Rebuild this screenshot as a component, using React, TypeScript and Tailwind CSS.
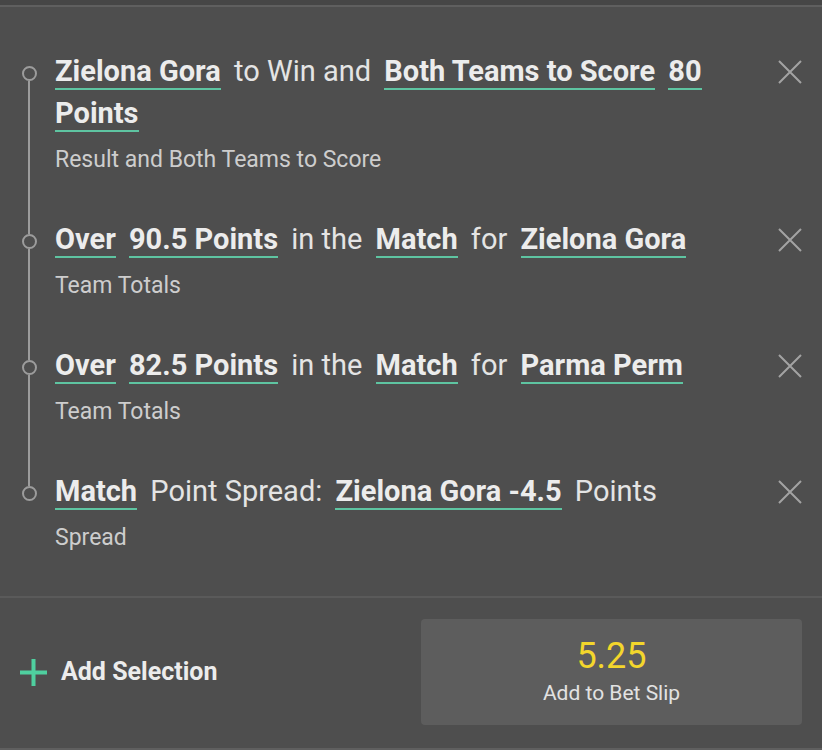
import React from "react";

// a piece of a leg title: bold ones are underlined selections
type Part = { text: string; sel?: boolean };

type Leg = {
  id: number;
  parts: Part[];
  market: string;
};

const legs: Leg[] = [
  {
    id: 1,
    parts: [
      { text: "Zielona Gora", sel: true },
      { text: "to Win and" },
      { text: "Both Teams to Score", sel: true },
      { text: "80 Points", sel: true },
    ],
    market: "Result and Both Teams to Score",
  },
  {
    id: 2,
    parts: [
      { text: "Over", sel: true },
      { text: "90.5 Points", sel: true },
      { text: "in the" },
      { text: "Match", sel: true },
      { text: "for" },
      { text: "Zielona Gora", sel: true },
    ],
    market: "Team Totals",
  },
  {
    id: 3,
    parts: [
      { text: "Over", sel: true },
      { text: "82.5 Points", sel: true },
      { text: "in the" },
      { text: "Match", sel: true },
      { text: "for" },
      { text: "Parma Perm", sel: true },
    ],
    market: "Team Totals",
  },
  {
    id: 4,
    parts: [
      { text: "Match", sel: true },
      { text: "Point Spread:" },
      { text: "Zielona Gora -4.5", sel: true },
      { text: "Points" },
    ],
    market: "Spread",
  },
];

function CloseIcon() {
  return (
    <svg width="24" height="24" viewBox="0 0 24 24" fill="none">
      <path d="M1 1L23 23M23 1L1 23" stroke="#a3a3a3" strokeWidth="2" />
    </svg>
  );
}

function LegRow({ leg, first, last }: { leg: Leg; first: boolean; last: boolean }) {
  return (
    <div className="flex">
      {/* timeline column */}
      <div className="w-[55px] shrink-0 flex flex-col items-center pl-[3px]">
        <div className={`h-[16px] w-[2px] ${first ? "" : "bg-[#9c9c9c]"}`} />
        <div className="w-[15px] h-[15px] rounded-full border-2 border-[#9c9c9c] shrink-0" />
        <div className={`flex-1 w-[2px] ${last ? "" : "bg-[#9c9c9c]"}`} />
      </div>

      <div className="flex-1 pr-[13px] pb-[44px]">
        <p className="text-[29px] leading-[42px] text-[#e4e4e4]">
          {leg.parts.map((p, i) => (
            <React.Fragment key={i}>
              {p.sel ? (
                <span className="font-bold text-[#ececec] border-b-2 border-[#5ec4a1] mr-[6px]">
                  {p.text}
                </span>
              ) : (
                <span className="mr-[6px]">{p.text}</span>
              )}{" "}
            </React.Fragment>
          ))}
        </p>
        <p className="mt-[12px] text-[23px] leading-[28px] text-[#cdcdcd]">{leg.market}</p>
      </div>

      <div className="w-[44px] shrink-0 pt-[10px]">
        <CloseIcon />
      </div>
    </div>
  );
}

export default function App() {
  return (
    <div
      className="w-[822px] h-[750px] bg-[#4e4e4e] flex flex-col overflow-hidden"
      style={{ fontFamily: "Roboto, 'Liberation Sans', sans-serif" }}
    >
      <div className="h-[5px] bg-[#464646]" />
      <div className="h-[2px] bg-[#5f5f5f]" />

      <div className="pt-[43px] h-[589px]">
        {legs.map((leg, i) => (
          <LegRow key={leg.id} leg={leg} first={i === 0} last={i === legs.length - 1} />
        ))}
      </div>

      <div className="h-[2px] bg-[#5a5a5a]" />

      <div className="flex-1 flex items-center pl-[20px] pr-[20px] pb-[2px]">
        <div className="flex items-center gap-[14px]">
          <svg width="27" height="27" viewBox="0 0 27 27">
            <path d="M13.5 0V27M0 13.5H27" stroke="#4fcf9f" strokeWidth="4" />
          </svg>
          <span className="text-[25px] font-bold text-[#ececec]">Add Selection</span>
        </div>

        <button className="ml-auto w-[381px] h-[106px] rounded-[4px] bg-[#5d5d5d] flex flex-col items-center justify-center pb-[2px]">
          <span className="text-[36px] leading-[40px] text-[#f3d62c]">5.25</span>
          <span className="text-[21px] leading-[28px] text-[#e2e2e2] mt-[3px]">Add to Bet Slip</span>
        </button>
      </div>

      <div className="h-[2px] bg-[#5f5f5f]" />
    </div>
  );
}
